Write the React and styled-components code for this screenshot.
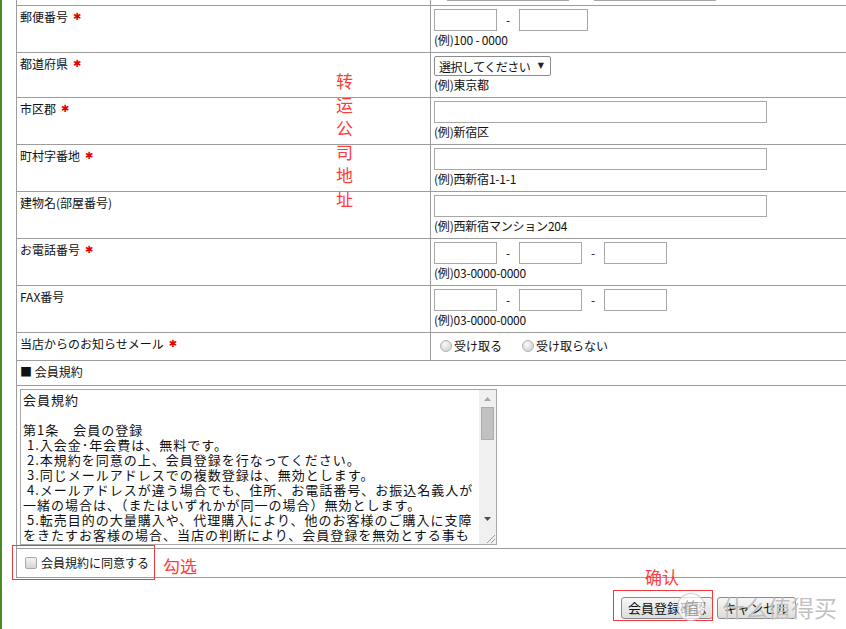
import React from "react";
import styled, { createGlobalStyle } from "styled-components";

const GlobalStyle = createGlobalStyle`
  html, body { margin: 0; padding: 0; overflow: hidden; background: #fff; }
  body {
    font-family: "Noto Sans CJK JP", "Noto Sans", sans-serif;
    font-size: 12px;
    color: #111;
  }
`;

const Page = styled.div`
  position: relative;
  display: flex;
  height: 629px;
  overflow: hidden;
`;

const GreenRule = styled.div`
  flex: none;
  width: 2px;
  background: #4b8a2c;
`;

const Main = styled.div`
  flex: 1;
  padding-left: 14px;
  margin-top: -25px;
`;

const FormTable = styled.table`
  border-collapse: collapse;
  table-layout: fixed;
  width: 836px;
`;

const Col = styled.col`
  width: ${(p) => p.$w}px;
`;

const Cell = styled.td`
  border: 1px solid #9d9d9d;
  vertical-align: top;
  padding: ${(p) => p.$pad || "3px 3px 4px"};
  line-height: 16px;
  white-space: nowrap;
`;

const Req = styled.span`
  display: inline-block;
  color: #e60000;
  font-family: "DejaVu Sans", sans-serif;
  font-size: 10px;
  line-height: 16px;
  vertical-align: top;
  margin-left: 5px;
`;

const FieldLine = styled.div`
  display: flex;
  align-items: center;
  height: ${(p) => p.$h || 22}px;
`;

const TextInput = styled.input`
  box-sizing: border-box;
  width: ${(p) => p.$w}px;
  height: 22px;
  margin: 0;
  padding: 1px 3px;
  border: 1px solid #a8a8a8;
  background: #fff;
  font: inherit;
`;

const Sep = styled.span`
  width: 22px;
  text-align: center;
`;

const Prefix = styled.span`
  width: ${(p) => p.$w}px;
`;

const Example = styled.div`
  margin-top: 1px;
  line-height: 16px;
  font-size: 12px;
  letter-spacing: -0.2px;
`;

const SelectBox = styled.div`
  display: inline-flex;
  align-items: center;
  box-sizing: border-box;
  width: 117px;
  height: 20px;
  border: 1px solid #8c8c8c;
  border-radius: 2px;
  padding: 0 6px 0 4px;
  background: #fff;
`;

const NativeSelect = styled.select`
  appearance: none;
  flex: 1;
  min-width: 0;
  border: none;
  outline: none;
  padding: 0;
  margin: 0;
  background: transparent;
  font-family: "Noto Sans CJK JP", sans-serif;
  font-size: 12px;
  letter-spacing: -0.5px;
  color: #111;
`;

const Arrow = styled.span`
  font-family: "DejaVu Sans", sans-serif;
  font-size: 8px;
  color: #222;
  pointer-events: none;
`;

const ChoiceLabel = styled.label`
  display: inline-flex;
  align-items: center;
  margin-right: 14px;
`;

const Radio = styled.input.attrs({ type: "radio" })`
  appearance: none;
  box-sizing: border-box;
  width: 12px;
  height: 12px;
  margin: 0 2px 0 6px;
  border-radius: 50%;
  border: 1px solid #b4b4b4;
  background: radial-gradient(circle at 40% 35%, #fafafa 0%, #dedede 55%, #c8c8c8 100%);
`;

const Checkbox = styled.input.attrs({ type: "checkbox" })`
  appearance: none;
  box-sizing: border-box;
  width: 12px;
  height: 12px;
  margin: 0 4px 0 4px;
  border: 1px solid #a9a9a9;
  border-radius: 2px;
  background: linear-gradient(#f4f4f4, #d4d4d4);
`;

const TermsBox = styled.div`
  display: flex;
  box-sizing: border-box;
  width: 477px;
  height: 156px;
  border: 1px solid #a8a8a8;
  background: #fff;
`;

const Terms = styled.textarea`
  flex: 1;
  min-width: 0;
  margin: 0;
  padding: 2px 2px;
  border: none;
  outline: none;
  resize: none;
  font-family: "Noto Sans CJK JP", sans-serif;
  font-size: 13px;
  letter-spacing: 1px;
  line-height: 15px;
  color: #111;
  white-space: pre;
  overflow: hidden;
`;

const Rail = styled.div`
  flex: none;
  width: 17px;
  display: flex;
  flex-direction: column;
  background: #f0f0f0;
`;

const RailButton = styled.div`
  height: 17px;
  display: flex;
  align-items: center;
  justify-content: center;
`;

const Track = styled.div`
  flex: 1;
  display: flex;
  flex-direction: column;
`;

const Thumb = styled.div`
  height: 33px;
  margin: 0 2px;
  box-sizing: border-box;
  background: #c1c1c1;
  border: 1px solid #adadad;
`;

const Corner = styled.div`
  height: 17px;
  background: #f0f0f0;
  display: flex;
  align-items: flex-end;
  justify-content: flex-end;
`;

const Button = styled.button`
  box-sizing: border-box;
  height: 22px;
  padding: 0 6px;
  border: 1px solid #8a8a8a;
  border-radius: 3px;
  background: linear-gradient(#f7f7f7, #dcdcdc);
  font-family: "Noto Sans CJK JP", sans-serif;
  font-size: 13px;
  color: #111;
  line-height: 20px;
`;

const ButtonRow = styled.div`
  display: flex;
  gap: 4px;
  padding: 19px 0 0 605px;
`;

const Note = styled.div`
  position: absolute;
  left: ${(p) => p.$x}px;
  top: ${(p) => p.$y}px;
  font-family: "Noto Sans CJK SC", sans-serif;
  font-size: 17px;
  line-height: ${(p) => p.$lh || 20}px;
  color: #ff3b3b;
  width: ${(p) => (p.$vertical ? "1em" : "auto")};
  word-break: break-all;
  text-align: center;
`;

const Frame = styled.div`
  position: absolute;
  left: ${(p) => p.$x}px;
  top: ${(p) => p.$y}px;
  width: ${(p) => p.$w}px;
  height: ${(p) => p.$h}px;
  border: 1px solid #f0393b;
  box-sizing: border-box;
  pointer-events: none;
`;

const Watermark = styled.div`
  position: absolute;
  left: 677px;
  top: 590px;
  display: flex;
  align-items: center;
  gap: 17px;
  pointer-events: none;
`;

const WmBadge = styled.div`
  width: 26px;
  height: 26px;
  border-radius: 50%;
  background: rgba(255, 255, 255, 0.7);
  border: 1px solid rgba(170, 170, 170, 0.55);
  display: flex;
  align-items: center;
  justify-content: center;
  font-family: "Noto Sans CJK SC", sans-serif;
  font-size: 17px;
  color: rgba(140, 140, 140, 0.75);
`;

const WmText = styled.div`
  font-family: "Noto Sans CJK SC", sans-serif;
  font-size: 23px;
  color: rgba(165, 165, 165, 0.7);
  text-shadow: 0 0 1px rgba(255, 255, 255, 0.9);
`;

const termsText = `会員規約

第1条　会員の登録
 1.入会金･年会費は、無料です。
 2.本規約を同意の上、会員登録を行なってください。
 3.同じメールアドレスでの複数登録は、無効とします。
 4.メールアドレスが違う場合でも、住所、お電話番号、お振込名義人が
一緒の場合は、（またはいずれかが同一の場合）無効とします。
 5.転売目的の大量購入や、代理購入により、他のお客様のご購入に支障
をきたすお客様の場合、当店の判断により、会員登録を無効とする事も
ございます。
 6.登録内容に虚偽があった場合、会員登録を無効とします。

第2条　会員情報の変更
 1.登録内容に変更があった場合は、速やかに変更してください。
 2.変更がない場合に生じた不利益について、当店は責任を負いません。

第3条　退会
 1.退会を希望される場合は、当店までご連絡ください。
 2.退会後のポイントは、すべて無効となります。`;

function Label({ children, req }) {
  return (
    <>
      {children}
      {req && <Req>✱</Req>}
    </>
  );
}

function TextRow({ label, req, children, example }) {
  return (
    <tr>
      <Cell>
        <Label req={req}>{label}</Label>
      </Cell>
      <Cell>
        <FieldLine>{children}</FieldLine>
        <Example>{example}</Example>
      </Cell>
    </tr>
  );
}

function TermsArea() {
  return (
    <TermsBox>
      <Terms readOnly wrap="off" defaultValue={termsText} />
      <Rail>
        <RailButton>
          <svg width="7" height="4" viewBox="0 0 7 4">
            <path d="M0 4 L3.5 0 L7 4 Z" fill="#a6a6a6" />
          </svg>
        </RailButton>
        <Track>
          <Thumb />
        </Track>
        <RailButton>
          <svg width="7" height="4" viewBox="0 0 7 4">
            <path d="M0 0 L7 0 L3.5 4 Z" fill="#4d4d4d" />
          </svg>
        </RailButton>
        <Corner>
          <svg width="12" height="12" viewBox="0 0 12 12">
            <path d="M11 3 L3 11 M11 7 L7 11" stroke="#9a9a9a" strokeWidth="1" />
          </svg>
        </Corner>
      </Rail>
    </TermsBox>
  );
}

export default function App() {
  return (
    <>
      <GlobalStyle />
      <Page>
        <GreenRule />
        <Main>
          <FormTable>
            <colgroup>
              <Col $w={414} />
              <Col $w={422} />
            </colgroup>
            <tbody>
              <tr>
                <Cell>
                  <Label req>フリガナ</Label>
                </Cell>
                <Cell>
                  <FieldLine>
                    <Prefix $w={13}>セ</Prefix>
                    <TextInput $w={122} />
                    <Prefix $w={25}>　メ</Prefix>
                    <TextInput $w={122} />
                  </FieldLine>
                </Cell>
              </tr>
              <TextRow label="郵便番号" req example="(例)100 - 0000">
                <TextInput $w={63} />
                <Sep>-</Sep>
                <TextInput $w={69} />
              </TextRow>
              <tr>
                <Cell>
                  <Label req>都道府県</Label>
                </Cell>
                <Cell>
                  <FieldLine $h={20}>
                    <SelectBox>
                      <NativeSelect defaultValue="">
                        <option value="">選択してください</option>
                        <option value="tokyo">東京都</option>
                      </NativeSelect>
                      <Arrow>▼</Arrow>
                    </SelectBox>
                  </FieldLine>
                  <Example>(例)東京都</Example>
                </Cell>
              </tr>
              <TextRow label="市区郡" req example="(例)新宿区">
                <TextInput $w={333} />
              </TextRow>
              <TextRow label="町村字番地" req example="(例)西新宿1-1-1">
                <TextInput $w={333} />
              </TextRow>
              <TextRow label="建物名(部屋番号)" example="(例)西新宿マンション204">
                <TextInput $w={333} />
              </TextRow>
              <TextRow label="お電話番号" req example="(例)03-0000-0000">
                <TextInput $w={63} />
                <Sep>-</Sep>
                <TextInput $w={63} />
                <Sep>-</Sep>
                <TextInput $w={63} />
              </TextRow>
              <TextRow label="FAX番号" example="(例)03-0000-0000">
                <TextInput $w={63} />
                <Sep>-</Sep>
                <TextInput $w={63} />
                <Sep>-</Sep>
                <TextInput $w={63} />
              </TextRow>
              <tr>
                <Cell>
                  <Label req>当店からのお知らせメール</Label>
                </Cell>
                <Cell>
                  <FieldLine $h={20}>
                    <ChoiceLabel>
                      <Radio name="mail" />
                      受け取る
                    </ChoiceLabel>
                    <ChoiceLabel>
                      <Radio name="mail" />
                      受け取らない
                    </ChoiceLabel>
                  </FieldLine>
                </Cell>
              </tr>
              <tr>
                <Cell colSpan={2} $pad="3px 3px 5px">
                  ■ 会員規約
                </Cell>
              </tr>
              <tr>
                <Cell colSpan={2} $pad="3px 3px 3px">
                  <TermsArea />
                </Cell>
              </tr>
              <tr>
                <Cell colSpan={2} $pad="6px 3px 6px 4px">
                  <FieldLine $h={16}>
                    <ChoiceLabel>
                      <Checkbox />
                      会員規約に同意する
                    </ChoiceLabel>
                  </FieldLine>
                </Cell>
              </tr>
            </tbody>
          </FormTable>
          <ButtonRow>
            <Button type="button">会員登録確認</Button>
            <Button type="button">キャンセル</Button>
          </ButtonRow>
        </Main>

        <Note $x={336} $y={69} $lh={23.5} $vertical>
          转运公司地址
        </Note>
        <Frame $x={12} $y={545} $w={143} $h={35} />
        <Note $x={163} $y={556}>勾选</Note>
        <Note $x={645} $y={567}>确认</Note>
        <Frame $x={613} $y={590} $w={100} $h={31} />
        <Watermark>
          <WmBadge>值</WmBadge>
          <WmText>什么值得买</WmText>
        </Watermark>
      </Page>
    </>
  );
}
